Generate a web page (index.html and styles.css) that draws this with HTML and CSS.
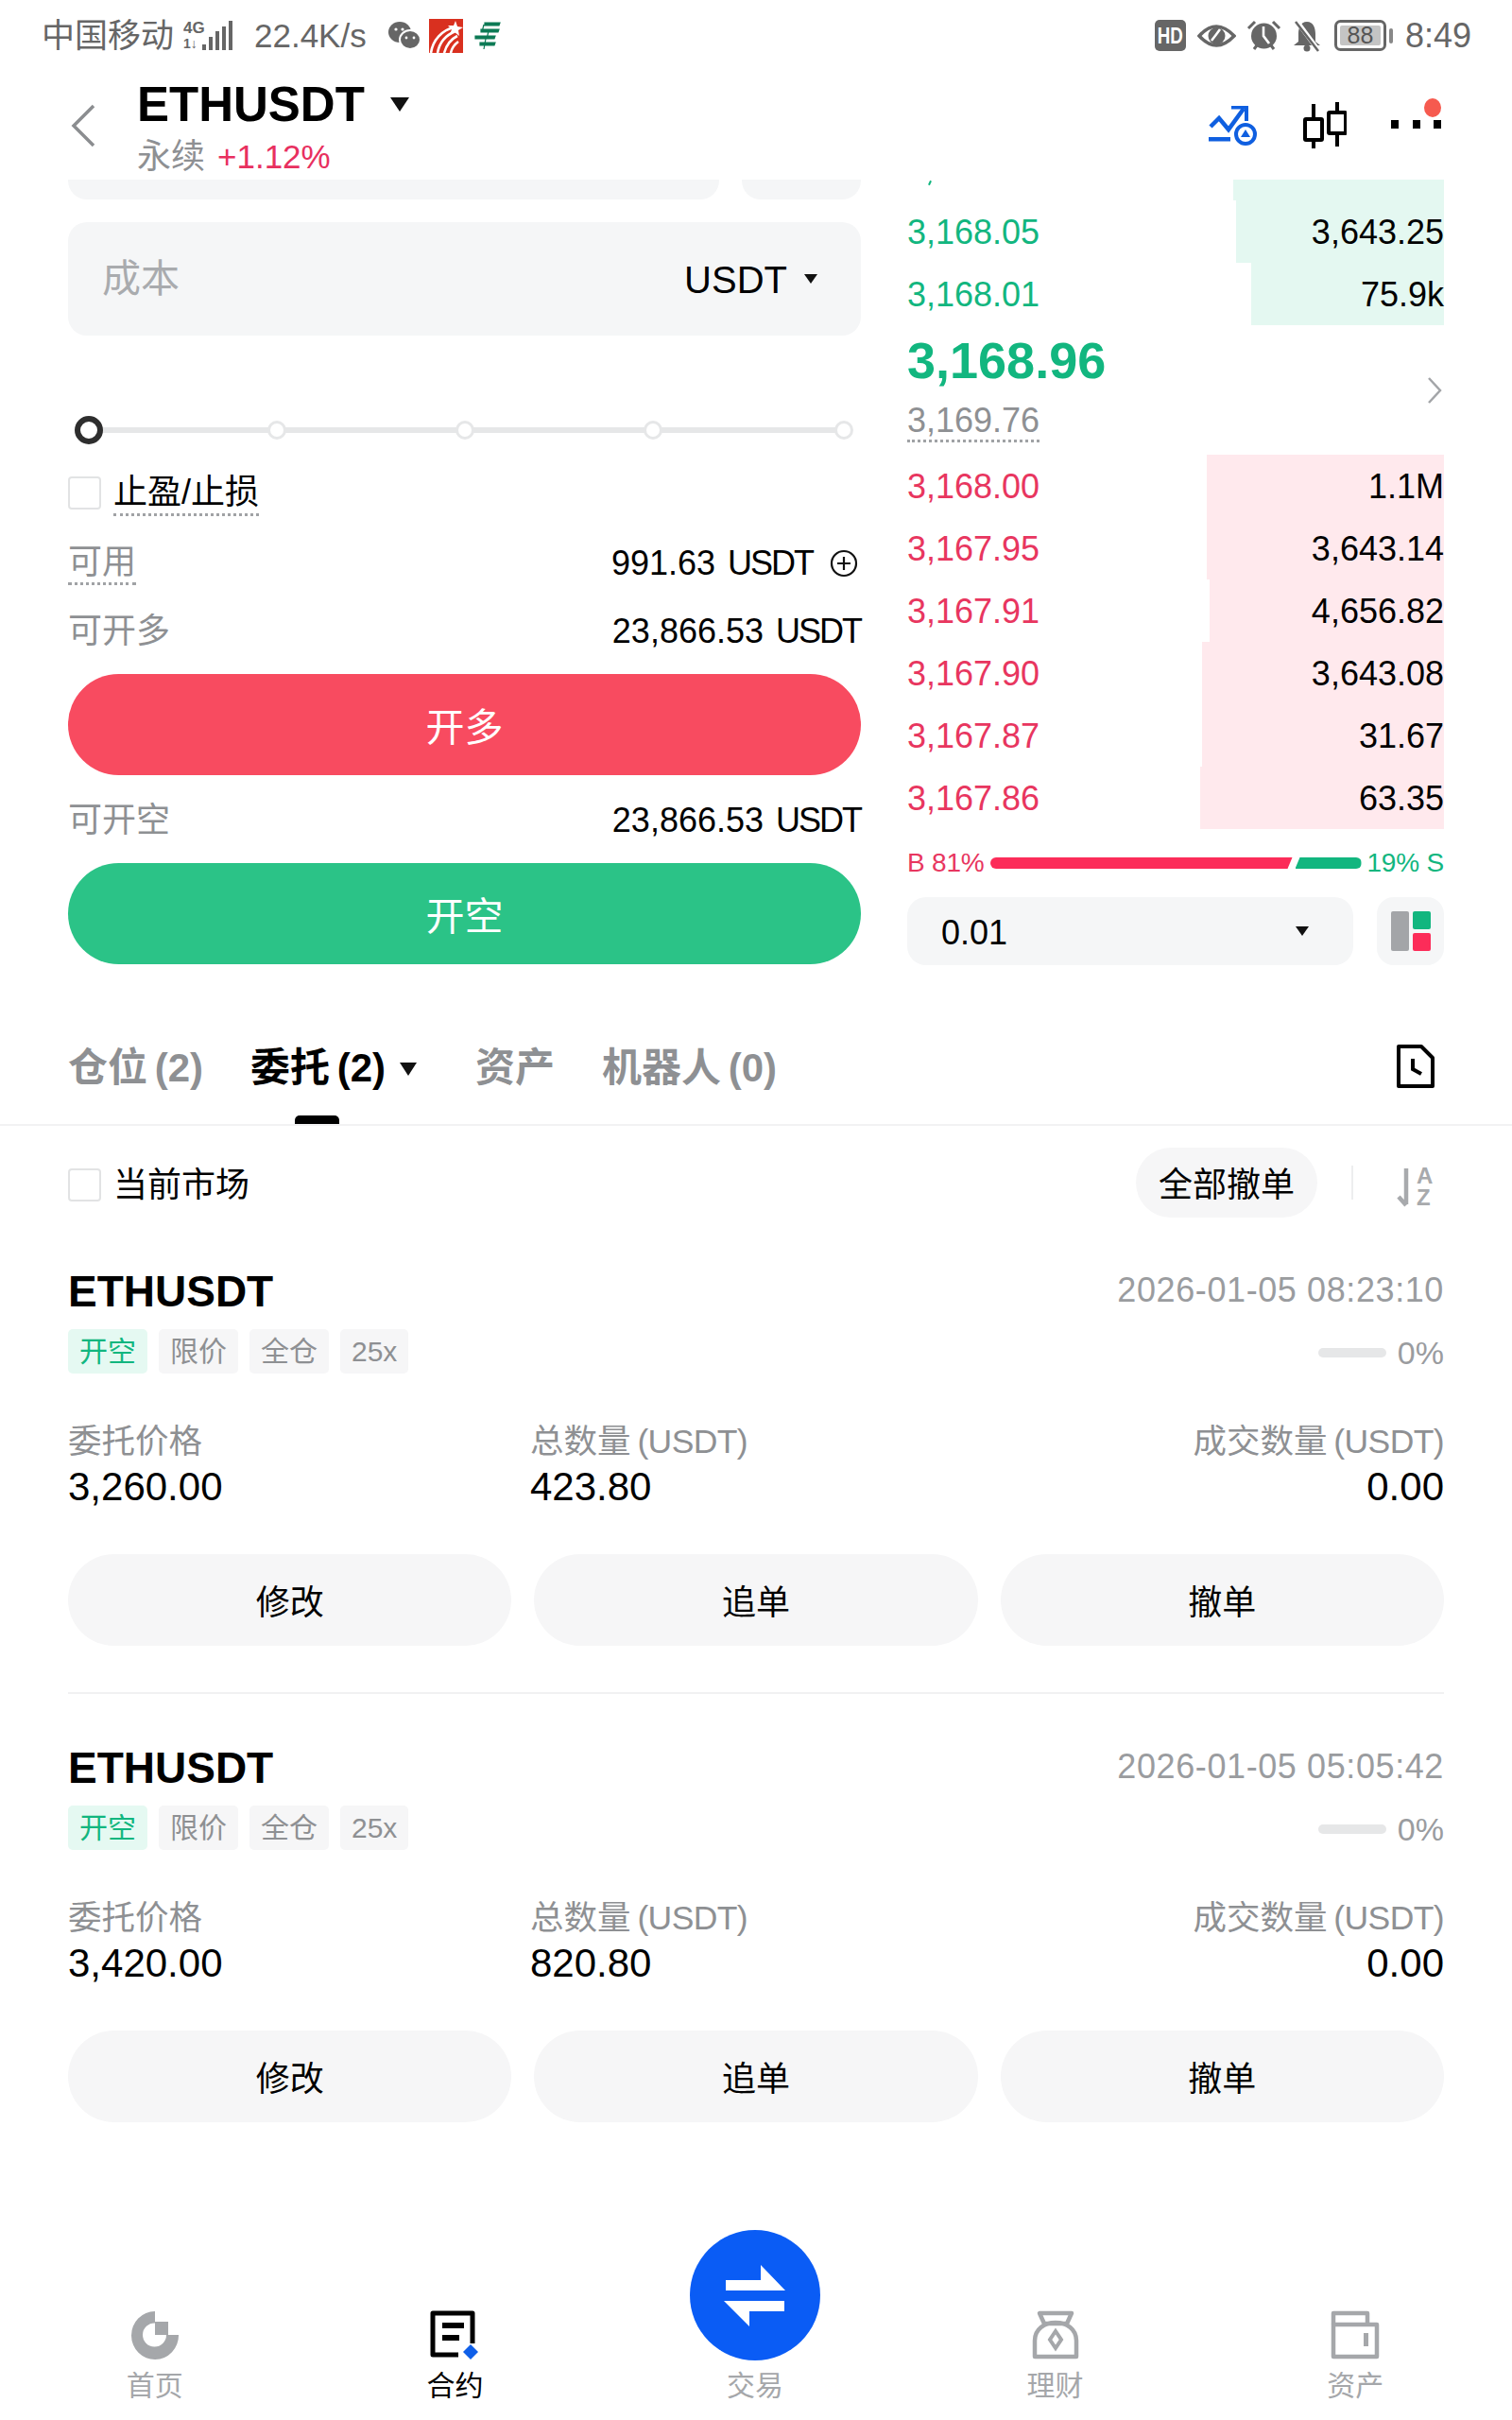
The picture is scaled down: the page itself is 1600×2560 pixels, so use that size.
FILE: index.html
```html
<!DOCTYPE html>
<html lang="zh-CN">
<head>
<meta charset="utf-8">
<title>ETHUSDT 永续</title>
<link rel="stylesheet" href="styles.css">
</head>
<body>
<div class="phone">

  <div class="status">
    <span class="carrier">中国移动</span>
    <svg class="st-signal" width="52" height="36" viewBox="0 0 52 36">
      <text x="0" y="15" class="sig-txt">4G</text>
      <text x="0" y="31" class="sig-txt sig-sm">1↓</text>
      <rect x="20" y="27" width="4" height="6" fill="#666"/>
      <rect x="27" y="19" width="4" height="14" fill="#666"/>
      <rect x="34" y="13" width="4" height="20" fill="#666"/>
      <rect x="41" y="8" width="4" height="25" fill="#666"/>
      <rect x="48" y="2" width="4" height="31" fill="#666"/>
    </svg>
    <span class="speed">22.4K/s</span>
    <svg class="st-wechat" width="34" height="30" viewBox="0 0 34 30">
      <ellipse cx="12" cy="11" rx="12" ry="11" fill="#666"/>
      <ellipse cx="23" cy="19" rx="11" ry="10" fill="#666" stroke="#fff" stroke-width="2"/>
      <circle cx="8" cy="8" r="1.6" fill="#fff"/><circle cx="15" cy="8" r="1.6" fill="#fff"/>
      <circle cx="19" cy="17" r="1.4" fill="#fff"/><circle cx="27" cy="17" r="1.4" fill="#fff"/>
    </svg>
    <svg class="st-app" width="36" height="36" viewBox="0 0 36 36">
      <rect width="36" height="36" fill="#d9301f"/>
      <path d="M2 36C4 22 14 12 26 9M9 36C11 25 18 17 28 13M16 36C18 29 22 22 30 18M23 36C24 31 27 27 31 24" fill="none" stroke="#fff" stroke-width="2.6"/>
      <path d="M28 2l2 6 6 1-5 3 1 6-5-4-5 3 2-6-4-4h6z" fill="#fff"/>
    </svg>
    <svg class="st-post" width="28" height="30" viewBox="0 0 28 30">
      <path d="M11 1H27L26 4H11ZM7 8H26L25 11H7ZM1 15H22L21 18H1ZM6 22H22L21 25H6ZM10 3L8 11M15 10L13 18M12 18L10 29" fill="#0d7a55" stroke="#0d7a55" stroke-width="1.2"/>
    </svg>
    <span class="status-gap"></span>
    <span class="st-hd"><span class="hd-txt">HD</span></span>
    <svg class="st-eye" width="41" height="28" viewBox="0 0 41 28">
      <path d="M2 14Q20 -6 39 14Q20 34 2 14Z" fill="none" stroke="#666" stroke-width="3.5"/>
      <circle cx="20.500" cy="14" r="9" fill="#666"/>
      <path d="M24 7Q19 14 15 19" fill="none" stroke="#fff" stroke-width="2.5"/>
    </svg>
    <svg class="st-alarm" width="37" height="33" viewBox="0 0 37 33">
      <path d="M2 9L9 2M35 9L28 2M8 31l3-4M29 31l-3-4" stroke="#666" stroke-width="3" fill="none"/>
      <circle cx="18.500" cy="17" r="13.500" fill="#666"/>
      <path d="M18 7V17L24 25" stroke="#fff" stroke-width="2.600" fill="none"/>
    </svg>
    <svg class="st-bell" width="32" height="34" viewBox="0 0 32 34">
      <path d="M16 2C9 2 7 9 7 15V23L2 27H30L25 23V15C25 9 23 2 16 2Z" fill="#666"/>
      <circle cx="16" cy="30" r="3.500" fill="#666"/>
      <path d="M5 1L28 32" stroke="#fff" stroke-width="5"/>
      <path d="M4 2L28 33" stroke="#666" stroke-width="2.500"/>
    </svg>
    <svg class="st-batt" width="62" height="33" viewBox="0 0 62 33">
      <rect x="1.500" y="1.500" width="52" height="30" rx="5" fill="none" stroke="#666" stroke-width="3"/>
      <rect x="6" y="6" width="43" height="21" rx="2" fill="#c4c4c4"/>
      <text x="27.500" y="25" class="batt-txt">88</text>
      <rect x="58" y="9" width="4" height="16" rx="2" fill="#888"/>
    </svg>
    <span class="clock">8:49</span>
  </div>

  <header class="topbar">
    <svg class="back" width="26" height="46" viewBox="0 0 26 46">
      <path d="M24 2L3 23L24 44" fill="none" stroke="#8b8d90" stroke-width="3.500"/>
    </svg>
    <div class="pair">
      <div class="pair-line"><span class="pair-name">ETHUSDT</span><i class="caret caret-lg"></i></div>
      <div class="pair-sub"><span class="perp">永续</span><span class="change">+1.12%</span></div>
    </div>
    <svg class="ico-trend" width="52" height="42" viewBox="0 0 52 42">
      <path d="M2 22L11 13L21 25L37 3" fill="none" stroke="#0f5fe0" stroke-width="4.500"/>
      <path d="M24 1.500H40V16" fill="none" stroke="#0f5fe0" stroke-width="4"/>
      <rect x="0" y="33" width="23" height="4.500" fill="#0f5fe0"/>
      <circle cx="39" cy="30" r="10" fill="#fff" stroke="#0f5fe0" stroke-width="4"/>
      <path d="M39 25L44 33H34Z" fill="#0f5fe0"/>
    </svg>
    <svg class="ico-candle" width="46" height="50" viewBox="0 0 46 50">
      <path d="M11 2V49M36 0V47" stroke="#000" stroke-width="4"/>
      <rect x="2" y="18" width="18" height="22" rx="1" fill="#fff" stroke="#000" stroke-width="4"/>
      <rect x="27" y="11" width="18" height="22" rx="1" fill="#fff" stroke="#000" stroke-width="4"/>
    </svg>
    <div class="more">
      <i class="more-dot"></i><i class="more-dot"></i><i class="more-dot"></i>
      <i class="more-badge"></i>
    </div>
  </header>

  <section class="trade">
    <div class="form">
      <div class="clipped-row"><div class="clipped a"></div><div class="clipped b"></div></div>
      <div class="cost">
        <span class="cost-ph">成本</span>
        <span class="cost-unit">USDT</span><i class="caret caret-sm"></i>
      </div>
      <div class="slider">
        <i class="thumb"></i><i class="node"></i><i class="node"></i><i class="node"></i><i class="node"></i>
      </div>
      <label class="tpsl">
        <i class="check"></i><span class="dotted">止盈/止损</span>
      </label>
      <div class="info info-avail">
        <span class="info-k dotted">可用</span>
        <span class="info-v"><span>991.63 <span class="unit">USDT</span></span>
          <svg class="plus" width="30" height="30" viewBox="0 0 30 30">
            <circle cx="15" cy="15" r="13" fill="none" stroke="#111" stroke-width="2.200"/>
            <path d="M15 8V22M8 15H22" stroke="#111" stroke-width="2.200"/>
          </svg>
        </span>
      </div>
      <div class="info info-long">
        <span class="info-k">可开多</span>
        <span class="info-v"><span>23,866.53 <span class="unit">USDT</span></span></span>
      </div>
      <button class="cta cta-long">开多</button>
      <div class="info info-short">
        <span class="info-k">可开空</span>
        <span class="info-v"><span>23,866.53 <span class="unit">USDT</span></span></span>
      </div>
      <button class="cta cta-short">开空</button>
    </div>

    <div class="book">
      <div class="book-sliver ask" style="--d:223px"><i class="tick"></i></div>
      <div class="book-row ask" style="--d:220px"><span class="px up">3,168.05</span><span>3,643.25</span></div>
      <div class="book-row ask" style="--d:204px"><span class="px up">3,168.01</span><span>75.9k</span></div>
      <div class="book-mid">
        <div>
          <div class="last">3,168.96</div>
          <div class="mark"><span class="mark-val">3,169.76</span></div>
        </div>
        <svg width="16" height="30" viewBox="0 0 16 30"><path d="M2 2L14 15L2 28" fill="none" stroke="#a3a5a8" stroke-width="2.500"/></svg>
      </div>
      <div class="book-row bid" style="--d:251px"><span class="px down">3,168.00</span><span>1.1M</span></div>
      <div class="book-row bid" style="--d:251px"><span class="px down">3,167.95</span><span>3,643.14</span></div>
      <div class="book-row bid" style="--d:248px"><span class="px down">3,167.91</span><span>4,656.82</span></div>
      <div class="book-row bid" style="--d:256px"><span class="px down">3,167.90</span><span>3,643.08</span></div>
      <div class="book-row bid" style="--d:256px"><span class="px down">3,167.87</span><span>31.67</span></div>
      <div class="book-row bid" style="--d:258px"><span class="px down">3,167.86</span><span>63.35</span></div>
      <div class="ratio">
        <span class="down">B 81%</span>
        <div class="ratio-bar"><i class="ratio-b"></i><i class="ratio-s"></i></div>
        <span class="up">19% S</span>
      </div>
      <div class="book-tools">
        <div class="depth-select"><span class="depth-val">0.01</span><i class="caret caret-sm"></i></div>
        <div class="layout-btn">
          <svg width="42" height="42" viewBox="0 0 42 42">
            <rect width="19" height="42" rx="2" fill="#a3a5a8"/>
            <rect x="23" width="19" height="19" rx="2" fill="#12b67f"/>
            <rect x="23" y="23" width="19" height="19" rx="2" fill="#fc2c59"/>
          </svg>
        </div>
      </div>
    </div>
  </section>

  <nav class="tabs">
    <span class="tab">仓位 (2)</span>
    <span class="tab tab-active">委托 (2)<i class="caret caret-tab"></i></span>
    <span class="tab">资产</span>
    <span class="tab">机器人 (0)</span>
    <svg class="ico-file" width="40" height="46" viewBox="0 0 40 46">
      <path d="M2 2H26L38 14V44H2Z" fill="none" stroke="#000" stroke-width="4" stroke-linejoin="round"/>
      <path d="M17 15V26L26 31" fill="none" stroke="#000" stroke-width="4"/>
    </svg>
  </nav>

  <div class="filter">
    <label class="market"><i class="check"></i><span>当前市场</span></label>
    <button class="cancel-all">全部撤单</button>
    <i class="filter-sep"></i>
    <svg class="ico-sort" width="40" height="58" viewBox="0 -8 40 58">
      <path d="M10 1V39M2 31L10 40" fill="none" stroke="#a8aaad" stroke-width="4.500"/>
      <text x="21" y="17" class="sort-txt">A</text>
      <text x="21" y="40" class="sort-txt">Z</text>
    </svg>
  </div>

  <article class="order">
    <div class="order-head">
      <span class="order-pair">ETHUSDT</span>
      <span class="order-time">2026-01-05 08:23:10</span>
    </div>
    <div class="order-tags">
      <span class="tag tag-green">开空</span><span class="tag">限价</span><span class="tag">全仓</span><span class="tag">25x</span>
      <div class="fill"><i class="fill-bar"></i><span>0%</span></div>
    </div>
    <div class="order-grid">
      <div class="cell"><div class="k">委托价格</div><div class="v">3,260.00</div></div>
      <div class="cell"><div class="k">总数量 <span class="k-unit">(USDT)</span></div><div class="v">423.80</div></div>
      <div class="cell cell-end"><div class="k">成交数量 <span class="k-unit">(USDT)</span></div><div class="v">0.00</div></div>
    </div>
    <div class="order-actions">
      <button class="act">修改</button><button class="act">追单</button><button class="act">撤单</button>
    </div>
  </article>

  <article class="order order-last">
    <div class="order-head">
      <span class="order-pair">ETHUSDT</span>
      <span class="order-time">2026-01-05 05:05:42</span>
    </div>
    <div class="order-tags">
      <span class="tag tag-green">开空</span><span class="tag">限价</span><span class="tag">全仓</span><span class="tag">25x</span>
      <div class="fill"><i class="fill-bar"></i><span>0%</span></div>
    </div>
    <div class="order-grid">
      <div class="cell"><div class="k">委托价格</div><div class="v">3,420.00</div></div>
      <div class="cell"><div class="k">总数量 <span class="k-unit">(USDT)</span></div><div class="v">820.80</div></div>
      <div class="cell cell-end"><div class="k">成交数量 <span class="k-unit">(USDT)</span></div><div class="v">0.00</div></div>
    </div>
    <div class="order-actions">
      <button class="act">修改</button><button class="act">追单</button><button class="act">撤单</button>
    </div>
  </article>

  <footer class="nav">
    <div class="nav-item">
      <svg class="nav-ico" width="52" height="52" viewBox="0 0 52 52">
        <path d="M26 1A25 25.500 0 1 0 51 26H38A12.500 12.500 0 1 1 26 13.500Z" fill="#a5a7aa"/>
        <rect x="26" y="12" width="14" height="14" fill="#a5a7aa"/>
      </svg>
      <span>首页</span>
    </div>
    <div class="nav-item nav-on">
      <svg class="nav-ico" width="52" height="52" viewBox="0 0 52 52">
        <path d="M30 47H3V3H45V35" fill="none" stroke="#000" stroke-width="5" stroke-linejoin="round"/>
        <rect x="13" y="13" width="23" height="6" fill="#000"/>
        <rect x="13" y="26" width="18" height="6" fill="#000"/>
        <path d="M43 36L51 44L43 52L35 44Z" fill="#0f5fe8"/>
      </svg>
      <span>合约</span>
    </div>
    <div class="nav-item nav-main">
      <svg class="nav-swap" width="138" height="138" viewBox="0 0 138 138">
        <circle cx="69" cy="69" r="69" fill="#0a5cf5"/>
        <path d="M38 53H75V37L101 64H38Z" fill="#fff"/>
        <path d="M100 86H63V102L36 75H100Z" fill="#fff"/>
      </svg>
      <span>交易</span>
    </div>
    <div class="nav-item">
      <svg class="nav-ico" width="52" height="52" viewBox="0 0 52 52">
        <path d="M9 3H43L38 14H14Z" fill="none" stroke="#a5a7aa" stroke-width="4.500" stroke-linejoin="round"/>
        <path d="M4 49V32C4 20 14 13 26 13C38 13 48 20 48 32V49Z" fill="none" stroke="#a5a7aa" stroke-width="4.500" stroke-linejoin="round"/>
        <path d="M26 22L32 31L26 40L20 31Z" fill="none" stroke="#a5a7aa" stroke-width="4"/>
      </svg>
      <span>理财</span>
    </div>
    <div class="nav-item">
      <svg class="nav-ico" width="52" height="52" viewBox="0 0 52 52">
        <path d="M3 15V3H39V15" fill="none" stroke="#a5a7aa" stroke-width="4.500" stroke-linejoin="round"/>
        <rect x="3" y="15" width="46" height="34" fill="none" stroke="#a5a7aa" stroke-width="4.500" stroke-linejoin="round"/>
        <rect x="35" y="24" width="5" height="14" fill="#a5a7aa"/>
      </svg>
      <span>资产</span>
    </div>
  </footer>
</div>
</body>
</html>
```

FILE: styles.css
```css
* { box-sizing: border-box; }

html, body {
  margin: 0;
  padding: 0;
  background: #fff;
}

body {
  font-family: "Liberation Sans", "Noto Sans CJK SC", sans-serif;
  color: #000;
}

i { display: block; font-style: normal; }

button {
  border: 0;
  font: inherit;
  padding: 0;
}

.phone {
  width: 1600px;
  height: 2560px;
  overflow: hidden;
}

/* status bar */
.status {
  height: 75px;
  padding: 0 43px 0 44px;
  display: flex;
  align-items: center;
  color: #666;
  font-size: 35px;
  line-height: 40px;
}
.carrier { width: 150px; }
.st-signal { margin-right: 23px; }
.speed { width: 142px; }
.st-app { margin-left: 9px; }
.st-post { margin-left: 12px; }
.status-gap { flex: 1; }
.st-hd {
  width: 33px;
  height: 33px;
  border-radius: 5px;
  background: #666;
  display: flex;
  align-items: center;
  justify-content: center;
}
.hd-txt {
  color: #fff;
  font-size: 24px;
  font-weight: 700;
  line-height: 33px;
  transform: scaleX(.78);
}
.st-eye { margin-left: 12px; }
.st-alarm { margin-left: 11px; }
.st-bell { margin-left: 11px; }
.st-batt { margin-left: 13px; }
.clock { margin-left: 13px; font-size: 36px; }
.sig-txt { font-size: 17px; font-weight: 700; fill: #666; }
.sig-sm { font-size: 14px; }
.batt-txt { font-size: 25px; fill: #555; text-anchor: middle; }

/* title bar */
.topbar {
  height: 115px;
  display: flex;
  align-items: center;
  padding: 0 75px;
  position: relative;
}
.back { margin-right: 44px; }
.pair { flex: 1; margin-top: 4px; }
.pair-line {
  display: flex;
  align-items: center;
  height: 58px;
}
.pair-name {
  font-size: 51px;
  font-weight: 700;
  line-height: 58px;
}
.pair-sub {
  display: flex;
  align-items: center;
  height: 44px;
  margin-top: 4px;
  font-size: 35px;
  line-height: 44px;
}
.perp { color: #8e9093; width: 85px; font-size: 36px; }
.change { color: #e8305f; }
.ico-trend { margin-right: 48px; }
.ico-candle { margin-right: 47px; }
.more {
  width: 53px;
  display: flex;
  justify-content: space-between;
  position: relative;
  margin-top: -2px;
}
.more-dot { width: 8px; height: 9px; background: #000; }
.more-badge {
  position: absolute;
  right: 0;
  top: -23px;
  width: 18px;
  height: 20px;
  border-radius: 50%;
  background: #f65a4f;
}

/* downward triangles */
.caret {
  width: 0;
  height: 0;
  border-style: solid;
  border-color: #111 transparent transparent transparent;
}
.caret-lg { border-width: 15px 10.500px 0; margin-left: 27px; margin-top: -1px; }
.caret-sm { border-width: 10px 7.500px 0; }
.caret-tab { border-width: 14px 9.500px 0; margin-left: 15px; }

/* order form and book */
.trade {
  display: flex;
  gap: 49px;
  padding: 0 72px;
  height: 831px;
}
.form { width: 839px; }
.book { width: 568px; }

.clipped-row { display: flex; gap: 24px; }
.clipped {
  height: 21px;
  background: #f5f6f7;
  border-radius: 0 0 20px 20px;
}
.clipped.a { width: 689px; }
.clipped.b { width: 126px; }

.cost {
  height: 120px;
  margin-top: 24px;
  background: #f5f6f7;
  border-radius: 20px;
  display: flex;
  align-items: center;
  padding: 0 46px 0 36px;
}
.cost-ph { flex: 1; color: #a9abae; font-size: 41px; line-height: 54px; }
.cost-unit { font-size: 40px; margin-right: 18px; margin-top: 2px; }

.slider {
  height: 56px;
  margin-top: 72px;
  padding: 0 7px;
  display: flex;
  align-items: center;
  position: relative;
}
.slider::before {
  content: "";
  position: absolute;
  left: 20px;
  right: 14px;
  top: 25px;
  height: 6px;
  background: #e6e7e8;
}
.thumb {
  width: 30px;
  height: 30px;
  margin-right: -5px;
  border: 6px solid #2e2e2e;
  border-radius: 50%;
  background: #fff;
  position: relative;
}
.node {
  width: 20px;
  height: 20px;
  margin-left: 179px;
  border: 3px solid #e6e7e8;
  border-radius: 50%;
  background: #fff;
  position: relative;
}
.node:last-child { margin-left: 182px; }

.check {
  width: 35px;
  height: 35px;
  border: 2.500px solid #e2e3e4;
  border-radius: 4px;
  background: #fff;
}
.dotted {
  border-bottom: 3px dotted #a0a2a5;
  line-height: 42px;
  height: 45px;
}
.tpsl {
  display: flex;
  align-items: flex-start;
  gap: 13px;
  height: 44px;
  margin-top: 21px;
  font-size: 36px;
}
.tpsl .dotted { line-height: 34px; height: 42px; }

.info {
  display: flex;
  justify-content: space-between;
  align-items: center;
  height: 44px;
  font-size: 36px;
}
.info-avail { margin-top: 26px; }
.info-long { margin-top: 28px; }
.info-short { margin-top: 26px; }
.info-k { color: #8e9093; }
.info-long .info-k,
.info-short .info-k { line-height: 44px; margin-bottom: 1px; }
.info-v {
  display: flex;
  align-items: center;
  gap: 18px;
  white-space: nowrap;
  word-spacing: 3px;
}
.info-avail .info-v { margin-right: 3px; }
.unit { letter-spacing: -2px; }

.cta {
  display: block;
  width: 100%;
  height: 107px;
  margin-top: 23px;
  padding-bottom: 2px;
  border-radius: 54px;
  color: #fff;
  font-size: 41px;
}
.cta-long { background: #f84b60; }
.cta-short { background: #2bc387; }

.up { color: #12b67f; }
.down { color: #e8365f; }

.book-sliver {
  height: 22px;
  position: relative;
}
.tick {
  position: absolute;
  left: 23px;
  top: 1px;
  width: 2px;
  height: 5px;
  background: #12b67f;
  transform: rotate(25deg);
}
.ask { background: linear-gradient(to left, #e4f8f1 var(--d), transparent var(--d)); }
.bid { background: linear-gradient(to left, #ffe9ed var(--d), transparent var(--d)); }
.book-row {
  height: 66px;
  padding-top: 2px;
  display: flex;
  justify-content: space-between;
  align-items: center;
  font-size: 36px;
  line-height: 64px;
}
.book-mid {
  height: 137px;
  display: flex;
  justify-content: space-between;
  align-items: center;
  padding-right: 2px;
}
.last {
  color: #12b67f;
  font-size: 54px;
  font-weight: 700;
  line-height: 60px;
  margin-top: -6px;
}
.mark { margin-top: 13px; height: 44px; }
.mark-val {
  display: inline-block;
  color: #8e9093;
  font-size: 36px;
  line-height: 41px;
  border-bottom: 3px dotted #a0a2a5;
}

.ratio {
  height: 40px;
  margin-top: 16px;
  display: flex;
  align-items: center;
  justify-content: space-between;
  font-size: 28px;
  line-height: 40px;
  white-space: nowrap;
  letter-spacing: -.2px;
}
.ratio-bar {
  width: 393px;
  display: flex;
  gap: 3px;
}
.ratio-b {
  flex: 1;
  height: 12px;
  background: #fc2c59;
  border-radius: 6px 0 0 6px;
  clip-path: polygon(0 0, 100% 0, calc(100% - 5px) 100%, 0 100%);
}
.ratio-s {
  width: 70px;
  height: 12px;
  background: #12b67f;
  border-radius: 0 6px 6px 0;
  clip-path: polygon(5px 0, 100% 0, 100% 100%, 0 100%);
}

.book-tools {
  display: flex;
  justify-content: space-between;
  margin-top: 16px;
}
.depth-select {
  width: 472px;
  height: 72px;
  padding: 0 47px 0 36px;
  border-radius: 20px;
  background: #f5f6f7;
  display: flex;
  align-items: center;
  justify-content: space-between;
  font-size: 36px;
}
.depth-val { margin-top: 3px; }
.layout-btn {
  width: 71px;
  height: 72px;
  border-radius: 18px;
  background: #f5f6f7;
  display: flex;
  align-items: center;
  justify-content: center;
}

/* tabs */
.tabs {
  height: 170px;
  padding: 79px 82px 0 72px;
  border-bottom: 2px solid #f2f2f3;
  display: flex;
  align-items: flex-start;
  gap: 50px;
  font-size: 42px;
  font-weight: 600;
  line-height: 60px;
  word-spacing: -4px;
}
.tab {
  color: #8e9093;
  display: flex;
  align-items: flex-start;
  height: 89px;
  white-space: pre;
  position: relative;
}
.tab-active { color: #000; margin-right: 12px; }
.tab-active .caret { margin-top: 24px; }
.tab-active::after {
  content: "";
  position: absolute;
  left: 47px;
  bottom: 0;
  width: 47px;
  height: 9px;
  background: #000;
  border-radius: 5px 5px 0 0;
}
.ico-file { margin-left: auto; margin-top: 5px; }

/* order filter */
.filter {
  height: 97px;
  padding: 23px 82px 0 72px;
  display: flex;
  align-items: center;
}
.market {
  display: flex;
  align-items: center;
  gap: 13px;
  flex: 1;
  font-size: 36px;
}
.market .check { margin-top: 5px; }
.market span { margin-bottom: 2px; }
.cancel-all {
  width: 192px;
  height: 74px;
  padding-bottom: 2px;
  border-radius: 37px;
  background: #f6f6f7;
  font-size: 36px;
  color: #000;
}
.filter-sep {
  width: 2px;
  height: 36px;
  margin: 0 46px 0 36px;
  background: #edeeef;
}
.ico-sort { margin-top: 2px; margin-bottom: -8px; }
.sort-txt { font-size: 24px; font-weight: 700; fill: #a8aaad; }

/* order cards */
.order {
  height: 504px;
  margin: 0 72px;
  padding-top: 53px;
  border-bottom: 2px solid #f1f1f2;
}
.order-last { border-bottom: 0; }
.order-head {
  display: flex;
  justify-content: space-between;
  align-items: center;
  height: 50px;
}
.order-pair { font-size: 46px; font-weight: 700; }
.order-time { color: #9a9c9f; font-size: 36px; letter-spacing: .6px; margin-bottom: 2px; }

.order-tags {
  display: flex;
  align-items: center;
  gap: 12px;
  height: 47px;
  margin-top: 15px;
}
.tag {
  height: 47px;
  padding: 0 12px;
  border-radius: 5px;
  background: #f6f6f7;
  color: #8e9093;
  font-size: 30px;
  line-height: 47px;
}
.tag-green { background: #e5f9f2; color: #12b67f; }
.fill {
  margin-left: auto;
  padding-top: 3px;
  display: flex;
  align-items: center;
  gap: 12px;
  color: #9a9c9f;
  font-size: 34px;
}
.fill-bar {
  width: 72px;
  height: 10px;
  border-radius: 5px;
  background: #e6e7e8;
}

.order-grid {
  display: grid;
  grid-template-columns: 489px 1fr 1fr;
  margin-top: 52px;
}
.cell-end { text-align: right; }
.k {
  color: #8e9093;
  font-size: 35.500px;
  line-height: 40px;
  word-spacing: -3px;
}
.k-unit { letter-spacing: -.6px; }
.v {
  margin-top: 3px;
  font-size: 42px;
  line-height: 50px;
}

.order-actions {
  display: flex;
  gap: 24px;
  margin-top: 46px;
}
.act {
  flex: 1;
  height: 97px;
  padding-bottom: 2px;
  border-radius: 49px;
  background: #f6f6f7;
  color: #000;
  font-size: 36px;
}

/* bottom navigation */
.nav {
  height: 203px;
  margin-top: 63px;
  padding: 0 7px 20px 5px;
  display: flex;
  align-items: flex-end;
}
.nav-item {
  flex: 1;
  display: flex;
  flex-direction: column;
  align-items: center;
  color: #a5a7aa;
  font-size: 30px;
  line-height: 36px;
}
.nav-ico { margin-bottom: 10px; }
.nav-swap { margin-bottom: 9px; }
.nav-on { color: #000; }
```
